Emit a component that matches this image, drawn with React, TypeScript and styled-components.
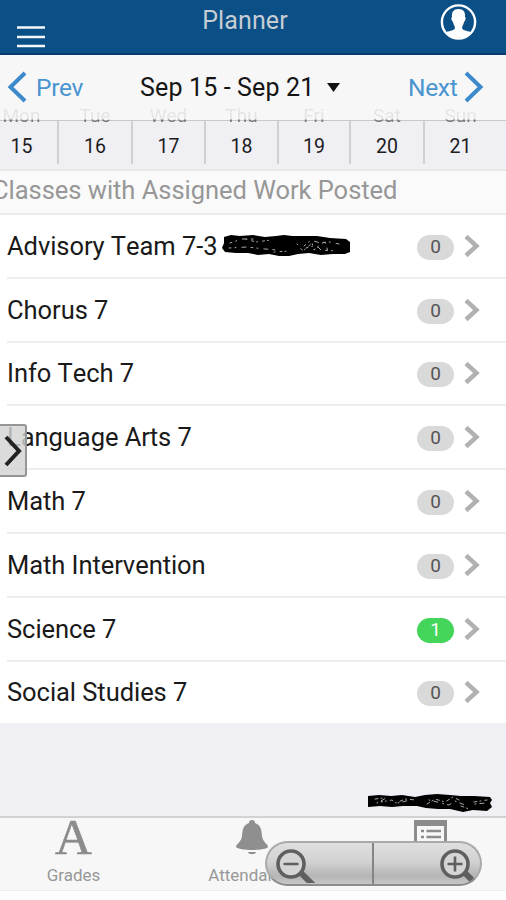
import React from 'react';
import styled, { createGlobalStyle } from 'styled-components';

const Global = createGlobalStyle`
  * { box-sizing: border-box; }
  body { margin: 0; background: #fff; font-family: Roboto, "Liberation Sans", sans-serif; overflow: hidden; }
  svg { display: block; flex: none; }
`;

const Screen = styled.div`
  width: 506px;
  height: 900px;
  position: relative;
  display: flex;
  flex-direction: column;
  overflow: hidden;
  background: #fff;
`;

const Header = styled.header`
  height: 55px;
  flex: none;
  display: grid;
  grid-template-columns: 1fr auto 1fr;
  align-items: start;
  padding: 0 29px 0 17px;
  background: #0b4f87;
  border-bottom: 2px solid #073a72;
`;

const MenuIcon = styled.svg`
  margin-top: 25px;
`;

const Title = styled.h1`
  margin: 0;
  padding: 6px 4px 0 0;
  font-size: 25px;
  line-height: 30px;
  font-weight: 400;
  letter-spacing: 0.1px;
  color: #c6ccd3;
`;

const ProfileIcon = styled.svg`
  justify-self: end;
  margin-top: 3px;
`;

const WeekBar = styled.nav`
  height: 66px;
  flex: none;
  display: grid;
  grid-template-columns: 140px 1fr 98px;
  align-items: start;
  padding: 16px 0 0 7px;
  background: #f7f7f7;
  border-bottom: 1px solid #c9c9cb;
`;

const WeekLink = styled.div<{ $gap: number }>`
  display: flex;
  align-items: center;
  gap: ${(p) => p.$gap}px;
  height: 32px;
  font-size: 24.5px;
  letter-spacing: -0.3px;
  color: #4a94d0;
`;

const WeekRange = styled.div`
  display: flex;
  align-items: center;
  gap: 13px;
  height: 32px;
  margin-left: -7px;
  white-space: nowrap;
  font-size: 25px;
  letter-spacing: 0.15px;
  color: #151515;
`;

const Days = styled.div`
  height: 50px;
  flex: none;
  display: grid;
  grid-template-columns: 59px 74px 73px 73px 72px 74px 81px;
  background: #efeff4;
  border-bottom: 2px solid #e7e7e9;
`;

const Day = styled.div<{ $shift: number }>`
  height: 43px;
  position: relative;
  display: flex;
  justify-content: center;
  padding-right: ${(p) => p.$shift}px;
  padding-top: 14px;
  border-right: 2px solid #d0d0d4;
  font-size: 19.5px;
  line-height: 24px;
  color: #1c1c1e;
  &:last-child { border-right: 0; }
`;

const DayName = styled.span<{ $shift: number }>`
  position: absolute;
  top: -17px;
  left: 0;
  right: ${(p) => p.$shift}px;
  text-align: center;
  font-size: 19px;
  line-height: 24px;
  background: linear-gradient(#e4e4e5 0 15px, #77777b 16px 18px, transparent 19px);
  background-clip: text;
  -webkit-background-clip: text;
  color: transparent;
`;

const SectionTitle = styled.h2`
  height: 44px;
  flex: none;
  margin: 0;
  padding-top: 3px;
  text-indent: -8px;
  background: #fafafa;
  border-bottom: 2px solid #ececec;
  font-size: 25.5px;
  line-height: 32px;
  font-weight: 400;
  letter-spacing: -0.03px;
  white-space: nowrap;
  color: #979797;
`;

const ClassList = styled.div`
  height: 508px;
  flex: none;
  display: grid;
  grid-template-rows: repeat(7, 63.8px) 1fr;
  padding-left: 7px;
`;

const ClassRow = styled.div`
  display: flex;
  align-items: center;
  padding: 0 26px 0 0;
  border-bottom: 2px solid #ededed;
  &:last-child { border-bottom: 0; padding-bottom: 1px; }
`;

const ClassName = styled.span`
  flex: 1;
  display: flex;
  align-items: center;
  gap: 5px;
  font-size: 25.5px;
  line-height: 30px;
  letter-spacing: -0.05px;
  font-kerning: none;
  color: #1a1a1a;
  white-space: nowrap;
`;

const Count = styled.span<{ $active: boolean }>`
  width: 37px;
  height: 25px;
  margin: 3px 9px 0 0;
  border-radius: 13px;
  display: flex;
  align-items: center;
  justify-content: center;
  background: ${(p) => (p.$active ? '#44d65b' : '#d9d9d9')};
  color: ${(p) => (p.$active ? '#fff' : '#555')};
  font-size: 19px;
  line-height: 22px;
  padding-bottom: 1px;
`;

const Filler = styled.div`
  height: 93px;
  flex: none;
  display: flex;
  align-items: end;
  justify-content: flex-end;
  padding: 0 13px 3px 0;
  background: #efeff4;
`;

const TabBar = styled.footer`
  height: 75px;
  flex: none;
  display: grid;
  grid-template-columns: 147px 209px 149px;
  background: #f7f7f7;
  border-top: 2px solid #d2d2d2;
  border-bottom: 1px solid #eee;
`;

const Tab = styled.div`
  display: flex;
  flex-direction: column;
  align-items: center;
  justify-content: space-between;
  padding: 1px 0 4px;
  font-size: 17px;
  line-height: 22px;
  color: #989898;
`;

const LetterIcon = styled.span`
  font-family: "Liberation Serif", serif;
  font-size: 51px;
  line-height: 36px;
  height: 40px;
  color: #8c8c8c;
  -webkit-text-stroke: 0.6px #8c8c8c;
`;

const DrawerHandle = styled.button`
  position: absolute;
  left: -4px;
  top: 424px;
  width: 31px;
  height: 53px;
  padding: 0 0 0 6px;
  display: flex;
  align-items: center;
  background: rgba(211, 211, 211, 0.82);
  border: 2px solid #959595;
  border-radius: 3px;
`;

const ZoomControl = styled.div`
  position: absolute;
  left: 265px;
  top: 841px;
  width: 217px;
  height: 45px;
  display: grid;
  grid-template-columns: 107px 110px;
  border: 2px solid #aaa;
  border-bottom-color: #8c8c8c;
  border-radius: 23px;
  overflow: hidden;
  background: linear-gradient(#dfdfdf, #d2d2d2 45%, #b5b5b5 80%, #c6c6c6);
`;

const ZoomButton = styled.div<{ $end?: boolean }>`
  display: flex;
  justify-content: ${(p) => (p.$end ? 'flex-end' : 'flex-start')};
  padding: 5px ${(p) => (p.$end ? 9 : 0)}px 0 8px;
  border-right: ${(p) => (p.$end ? 0 : 2)}px solid #858585;
`;

const RowChevron = () => (
  <svg width="17" height="24" viewBox="0 0 17 24" fill="none" stroke="#b1b1b1" strokeWidth="4.4">
    <path d="M3 2.500 L13.500 12 L3 21.500" />
  </svg>
);

const NavChevron = ({ flip }: { flip?: boolean }) => (
  <svg width="20" height="32" viewBox="0 0 20 32" fill="none" stroke="#3c8acb" strokeWidth="4">
    <path d={flip ? 'M2 2 L16.5 16 L2 30' : 'M18 2 L3.5 16 L18 30'} />
  </svg>
);

const NameScribble = () => (
  <svg width="129" height="22" viewBox="0 0 129 22">
    <path
      fill="#000"
      d="M2 2 L9 0 L18 1 L31 0 L43 2 L54 1 L62 0 L70 1 L83 1 L95 1 L108 3 L124 4 L128 7 L128 17 L123 19 L111 19 L99 20 L87 18 L76 19 L67 21 L57 21 L47 19 L36 20 L26 18 L14 18 L3 17 L0 13 L2 8 Z"
    />
    <g fill="none" stroke="#aaa" strokeWidth="1" strokeLinecap="round">
      <path strokeDasharray="2 4 1 6 4 5" d="M8 8 L20 4 L31 4 M7 13 L25 12 L43 14 L55 15 M82 11 L89 5 L98 8 L108 7 L117 9 M84 13 L94 10 L99 15 L114 16" />
      <path strokeDasharray="1 5 2 3" d="M24 4 L34 7 L49 5 M52 17 L68 16 M75 9 L81 16 L90 8 L92 15 L103 6 L106 17" />
    </g>
  </svg>
);

const FooterScribble = () => (
  <svg width="126" height="19" viewBox="0 0 126 19">
    <path
      fill="#000"
      d="M1 2 L12 1 L24 2 L35 1 L48 3 L58 1 L70 0 L83 1 L94 2 L107 2 L123 3 L125 6 L123 9 L125 13 L120 17 L106 16 L96 18 L83 15 L71 15 L59 14 L50 12 L36 12 L25 13 L13 12 L1 13 Z"
    />
    <g fill="none" stroke="#aaa" strokeWidth="1" strokeLinecap="round">
      <path strokeDasharray="3 3 1 4" d="M8 5 L16 4 L14 8 L25 6 L29 9 L38 5 L49 6 M60 10 L68 5 L78 8 L86 3 L94 7 M107 8 L120 6 M94 12 L102 15" />
      <path strokeDasharray="1 4 4 5" d="M10 9 L19 4 M31 9 L43 6 M62 6 L82 11 L88 7 L98 11 M108 10 L119 9" />
    </g>
  </svg>
);

const Magnifier = ({ plus }: { plus?: boolean }) => (
  <svg width={plus ? 36 : 42} height="35" viewBox={plus ? '0 0 36 35' : '0 0 42 35'} fill="none" stroke="#5f5f5f">
    <path d="M26 25 L42 41" strokeWidth="6" />
    <circle cx="16" cy="16" r="13" fill="#d5d5d5" strokeWidth="3.6" />
    <path d={plus ? 'M8.5 16 H23.5 M16 8.5 V23.5' : 'M8.5 16 H23.5'} strokeWidth="2.6" />
  </svg>
);

const days: [string, string, number][] = [
  ['Mon', '15', 14],
  ['Tue', '16', 0],
  ['Wed', '17', 0],
  ['Thu', '18', 0],
  ['Fri', '19', 0],
  ['Sat', '20', 0],
  ['Sun', '21', 10],
];

const classes: { name: string; count: number; redacted?: boolean }[] = [
  { name: 'Advisory Team 7-3', count: 0, redacted: true },
  { name: 'Chorus 7', count: 0 },
  { name: 'Info Tech 7', count: 0 },
  { name: 'Language Arts 7', count: 0 },
  { name: 'Math 7', count: 0 },
  { name: 'Math Intervention', count: 0 },
  { name: 'Science 7', count: 1 },
  { name: 'Social Studies 7', count: 0 },
];

export default function App() {
  return (
    <Screen>
      <Global />
      <Header>
        <MenuIcon width="28" height="24" viewBox="0 0 28 24" stroke="#f4f8fb" strokeWidth="2.3">
          <path d="M0 2.5 H28 M0 12 H28 M0 21 H28" />
        </MenuIcon>
        <Title>Planner</Title>
        <ProfileIcon width="37" height="38" viewBox="0 0 37 38">
          <circle cx="18.5" cy="19" r="16.6" fill="none" stroke="#fff" strokeWidth="2.4" />
          <path
            fill="#fff"
            d="M18.5 6 C23.5 6 25.5 9 25 14 C26.2 14.5 25.5 18 24 19 C23.5 22 22 23 22 25 C22.5 28 29 28 32 29.5 C28 34.5 23.5 36 18.5 36 C13.5 36 9 34.5 5 29.5 C8 28 14.5 28 15 25 C15 23 13.5 22 13 19 C11.5 18 10.8 14.5 12 14 C11.5 9 13.5 6 18.5 6 Z"
          />
        </ProfileIcon>
      </Header>
      <WeekBar>
        <WeekLink $gap={9}><NavChevron />Prev</WeekLink>
        <WeekRange>
          Sep 15 - Sep 21
          <svg width="13" height="10" viewBox="0 0 13 10"><path d="M0 1 H13 L6.5 10 Z" fill="#111" /></svg>
        </WeekRange>
        <WeekLink $gap={7}>Next<NavChevron flip /></WeekLink>
      </WeekBar>
      <Days>
        {days.map(([name, date, shift]) => (
          <Day key={name} $shift={shift}>
            <DayName $shift={shift}>{name}</DayName>
            {date}
          </Day>
        ))}
      </Days>
      <SectionTitle>Classes with Assigned Work Posted</SectionTitle>
      <ClassList>
        {classes.map((c) => (
          <ClassRow key={c.name}>
            <ClassName>{c.name}{c.redacted && <NameScribble />}</ClassName>
            <Count $active={c.count > 0}>{c.count}</Count>
            <RowChevron />
          </ClassRow>
        ))}
      </ClassList>
      <Filler><FooterScribble /></Filler>
      <TabBar>
        <Tab><LetterIcon>A</LetterIcon>Grades</Tab>
        <Tab>
          <svg width="34" height="38" viewBox="0 0 34 38" fill="#8f8f8f">
            <path d="M17 1 C19 1 20 2 20 4 C26 6 26.5 11 27 17 C27.5 23 33 25 33 28 C30 32 4 32 1 28 C1 25 6.500 23 7 17 C7.500 11 8 6 14 4 C14 2 15 1 17 1 Z" />
            <path d="M13 33 H21 C20.500 36 13.500 36 13 33 Z" />
          </svg>
          Attendance
        </Tab>
        <Tab>
          <svg width="33" height="38" viewBox="0 0 33 38" fill="none" stroke="#8c8c8c">
            <path d="M1.500 3 V36 H31.500 V3" strokeWidth="3" />
            <path d="M0 4 H33" strokeWidth="6" />
            <path d="M7 12 H10 M7 18 H10 M7 24 H10 M12.500 12 H27 M12.500 18 H27 M12.500 24 H27" strokeWidth="2.500" />
          </svg>
        </Tab>
      </TabBar>
      <DrawerHandle aria-label="Open drawer">
        <svg width="18" height="32" viewBox="0 0 18 32" fill="none" stroke="#222" strokeWidth="4">
          <path d="M2 2 L15 16 L2 30" />
        </svg>
      </DrawerHandle>
      <ZoomControl>
        <ZoomButton><Magnifier /></ZoomButton>
        <ZoomButton $end><Magnifier plus /></ZoomButton>
      </ZoomControl>
    </Screen>
  );
}
